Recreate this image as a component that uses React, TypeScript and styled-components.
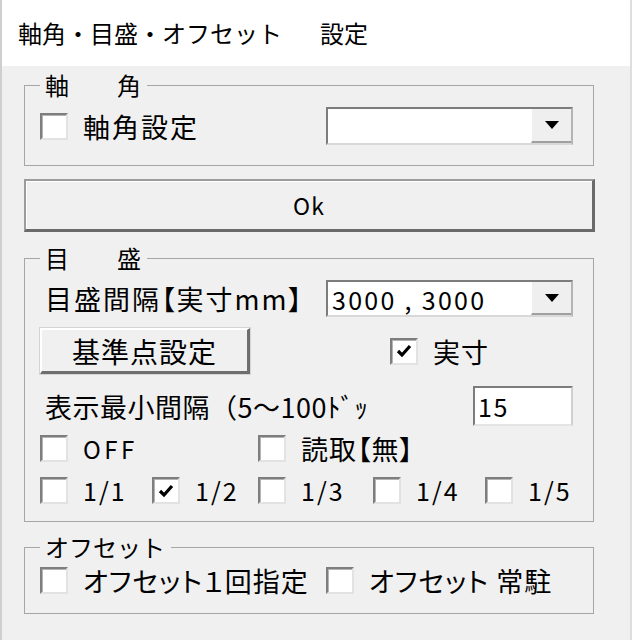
import React from "react";
import styled, { createGlobalStyle } from "styled-components";

const Global = createGlobalStyle`
  html, body { margin: 0; padding: 0; background: #f0f0f0; }
  body {
    font-family: "Noto Sans CJK JP", "Noto Sans", sans-serif;
    color: #000;
    font-feature-settings: "palt";
  }
`;

const Window = styled.div`
  width: 632px;
  height: 640px;
  box-sizing: border-box;
  background: #f0f0f0;
  border-left: 2px solid #cfcfcf;
  border-right: 2px solid #dedede;
  display: flex;
  flex-direction: column;
  overflow: hidden;
`;

const TitleBar = styled.div`
  height: 66px;
  flex: none;
  background: #fff;
  display: flex;
  align-items: center;
  gap: 38px;
  padding: 0 0 2px 16px;
  box-sizing: border-box;
  font-size: 24px;
  font-feature-settings: normal;
  white-space: pre;
`;

const Body = styled.div`
  display: flex;
  flex-direction: column;
  padding: 5px 0 0 22px;
`;

const Group = styled.fieldset<{ $pt: number; $pb: number; $mt: number }>`
  margin: ${(p) => p.$mt}px 0 0 0;
  padding: ${(p) => p.$pt}px 20px ${(p) => p.$pb}px 15px;
  width: 570px;
  box-sizing: border-box;
  border: 1px solid #a6a6a6;
  min-width: 0;
`;

const Legend = styled.legend`
  font-size: 24px;
  line-height: 28px;
  padding: 0 6px 0 5px;
  font-feature-settings: normal;
  white-space: pre;
`;

const Row = styled.div<{ $h: number; $mt?: number }>`
  display: flex;
  align-items: center;
  height: ${(p) => p.$h}px;
  margin-top: ${(p) => p.$mt ?? 0}px;
`;

const Grid = styled.div<{ $cols: string; $h: number; $mt?: number }>`
  display: grid;
  grid-template-columns: ${(p) => p.$cols};
  align-items: center;
  height: ${(p) => p.$h}px;
  margin-top: ${(p) => p.$mt ?? 0}px;
`;

const CheckWrap = styled.label<{ $col?: number; $ml?: number }>`
  display: flex;
  align-items: center;
  grid-column: ${(p) => p.$col ?? "auto"};
  margin-left: ${(p) => p.$ml ?? 0}px;
  white-space: nowrap;
`;

const Box = styled.span`
  flex: none;
  width: 28px;
  height: 27px;
  box-sizing: border-box;
  background: #fff;
  border-top: 2px solid #7e7e7e;
  border-left: 2px solid #7e7e7e;
  border-right: 2px solid #e2e2e2;
  border-bottom: 2px solid #e2e2e2;
  box-shadow: inset 1px 1px 0 #b4b4b4;
  display: flex;
  align-items: center;
  justify-content: center;
`;

const Text = styled.span<{ $size?: number; $ls?: number; $gap?: number }>`
  font-size: ${(p) => p.$size ?? 27}px;
  letter-spacing: ${(p) => p.$ls ?? 1}px;
  margin-left: ${(p) => p.$gap ?? 0}px;
  line-height: 1;
  white-space: pre;
`;

const Combo = styled.div<{ $h: number }>`
  margin-left: auto;
  width: 247px;
  height: ${(p) => p.$h}px;
  box-sizing: border-box;
  background: #fff;
  border-top: 2px solid #7c7c7c;
  border-left: 2px solid #7c7c7c;
  border-right: 2px solid #b4b4b4;
  border-bottom: 2px solid #d8d8d8;
  display: flex;
  align-items: stretch;
`;

const ComboValue = styled.span`
  flex: 1;
  display: flex;
  align-items: center;
  padding-left: 4px;
  font-size: 25px;
  letter-spacing: 2.3px;
`;

const DropButton = styled.span`
  flex: none;
  width: 40px;
  box-sizing: border-box;
  background: #efefef;
  border-left: 1px solid #ffffff;
  border-bottom: 2px solid #a0a0a0;
  display: flex;
  align-items: center;
  justify-content: center;
`;

const OkButton = styled.div`
  margin-top: 13px;
  width: 571px;
  height: 53px;
  box-sizing: border-box;
  background: #f0f0f0;
  border-top: 2px solid #9c9c9c;
  border-left: 2px solid #9c9c9c;
  border-right: 3px solid #6a6a6a;
  border-bottom: 3px solid #6a6a6a;
  box-shadow: inset 1px 1px 0 #ffffff;
  display: flex;
  align-items: center;
  justify-content: center;
  font-size: 23px;
  letter-spacing: 1px;
`;

const RaisedButton = styled.div`
  width: 210px;
  height: 46px;
  box-sizing: border-box;
  background: #f0f0f0;
  border-top: 2px solid #ffffff;
  border-left: 2px solid #ffffff;
  border-right: 3px solid #6e6e6e;
  border-bottom: 3px solid #6e6e6e;
  box-shadow: 0 0 0 1px #d4d4d4;
  display: flex;
  align-items: center;
  justify-content: center;
  font-size: 28px;
  letter-spacing: 1px;
`;

const Label = styled.span<{ $ls?: number; $palt?: boolean }>`
  margin-left: 5px;
  font-size: 27px;
  letter-spacing: ${(p) => p.$ls ?? 1}px;
  font-feature-settings: ${(p) => (p.$palt === false ? "normal" : '"palt"')};
  white-space: pre;
`;

const Field = styled.div`
  margin-left: auto;
  width: 100px;
  height: 40px;
  box-sizing: border-box;
  background: #fff;
  border-top: 2px solid #7c7c7c;
  border-left: 2px solid #7c7c7c;
  border-right: 2px solid #d0d0d0;
  border-bottom: 2px solid #e4e4e4;
  display: flex;
  align-items: center;
  padding-left: 3px;
  font-size: 25px;
  letter-spacing: 1.5px;
`;

const Arrow = () => (
  <svg width="14" height="8" viewBox="0 0 14 8">
    <path d="M0 0 H14 L7 8 Z" fill="#000" />
  </svg>
);

const Tick = () => (
  <svg width="16" height="14" viewBox="0 0 16 14">
    <path d="M2 7 L6 11 L14 2" stroke="#000" strokeWidth="3.2" fill="none" />
  </svg>
);

const Check = ({
  label,
  checked,
  col,
  ml,
  size,
  ls,
}: {
  label: string;
  checked?: boolean;
  col?: number;
  ml?: number;
  size?: number;
  ls?: number;
}) => (
  <CheckWrap $col={col} $ml={ml}>
    <Box>{checked ? <Tick /> : null}</Box>
    <Text $gap={15} $size={size} $ls={ls}>
      {label}
    </Text>
  </CheckWrap>
);

export default function App() {
  return (
    <>
      <Global />
      <Window>
        <TitleBar>
          <span>軸角・目盛・オフセット</span>
          <span>設定</span>
        </TitleBar>
        <Body>
          <Group $mt={0} $pt={8} $pb={20}>
            <Legend>軸　　角</Legend>
            <Row $h={38}>
              <Check label="軸角設定" ls={2} />
              <Combo $h={38}>
                <ComboValue />
                <DropButton>
                  <Arrow />
                </DropButton>
              </Combo>
            </Row>
          </Group>

          <OkButton>Ok</OkButton>

          <Group $mt={12} $pt={8} $pb={17}>
            <Legend>目　　盛</Legend>
            <Row $h={37}>
              <Label $ls={2}>目盛間隔【実寸mm】</Label>
              <Combo $h={37}>
                <ComboValue>3000 , 3000</ComboValue>
                <DropButton>
                  <Arrow />
                </DropButton>
              </Combo>
            </Row>
            <Row $h={46} $mt={11}>
              <RaisedButton>基準点設定</RaisedButton>
              <Check label="実寸" checked ml={140} />
            </Row>
            <Row $h={40} $mt={12}>
              <Label $palt={false} $ls={0.5}>表示最小間隔（5～100ﾄﾞｯ</Label>
              <Field>15</Field>
            </Row>
            <Grid $cols="112px 106px 115px 112px 1fr" $h={27} $mt={9}>
              <Check label="OFF" size={24} ls={3.5} />
              <Check label="読取【無】" col={3} />
            </Grid>
            <Grid $cols="112px 106px 115px 112px 1fr" $h={27} $mt={15}>
              <Check label="1/1" size={25} ls={2} />
              <Check label="1/2" size={25} ls={2} checked />
              <Check label="1/3" size={25} ls={2} />
              <Check label="1/4" size={25} ls={2} />
              <Check label="1/5" size={25} ls={2} />
            </Grid>
          </Group>

          <Group $mt={11} $pt={6} $pb={19}>
            <Legend>オフセット</Legend>
            <Grid $cols="286px 1fr" $h={27}>
              <Check label="オフセット１回指定" />
              <Check label="オフセット 常駐" />
            </Grid>
          </Group>
        </Body>
      </Window>
    </>
  );
}
